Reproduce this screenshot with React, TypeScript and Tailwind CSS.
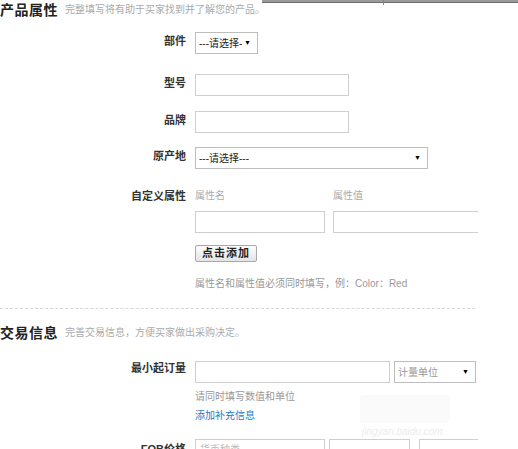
import React from "react";

const font = { fontFamily: '"Liberation Sans", "Noto Sans CJK SC", sans-serif' };

function Label({ children }: { children: React.ReactNode }) {
  return (
    <div className="text-right text-[11px] leading-[14px] font-bold text-[#333] pt-[2px] whitespace-nowrap">
      {children}
    </div>
  );
}

function Select({ text, w, gray }: { text: string; w: string; gray?: boolean }) {
  return (
    <div
      className={`${w} h-[22px] border border-[#bdbdbd] bg-white flex items-center justify-between pl-[3px] pr-[6px] text-[10px] ${gray ? "text-[#999]" : "text-[#222]"}`}
    >
      <span className="whitespace-nowrap overflow-hidden">{text}</span>
      <span className="text-[7px] text-black">▼</span>
    </div>
  );
}

function Input({ w }: { w: string }) {
  return <div className={`${w} h-[22px] border border-[#cfcfcf] bg-white shrink-0`} />;
}

export default function App() {
  return (
    <div className="w-[518px] h-[449px] overflow-hidden bg-white relative" style={font}>
      <div className="w-[478px] overflow-hidden">
        {/* Section 1 header */}
        <div className="flex items-center h-[20px] mt-[0px]">
          <span className="text-[14px] font-bold text-[#222] leading-[20px] tracking-[0.5px]">产品属性</span>
          <span className="ml-[7px] text-[10px] text-[#aaa] leading-[20px]">完整填写将有助于买家找到并了解您的产品。</span>
        </div>

        <div className="grid grid-cols-[186px_1fr] gap-x-[9px] mt-[12px] items-start">
          <Label>部件</Label>
          <Select text="---请选择-" w="w-[63px]" />
        </div>

        <div className="grid grid-cols-[186px_1fr] gap-x-[9px] mt-[20px] items-start">
          <Label>型号</Label>
          <Input w="w-[154px]" />
        </div>

        <div className="grid grid-cols-[186px_1fr] gap-x-[9px] mt-[15px] items-start">
          <Label>品牌</Label>
          <Input w="w-[154px]" />
        </div>

        <div className="grid grid-cols-[186px_1fr] gap-x-[9px] mt-[14px] items-start">
          <Label>原产地</Label>
          <Select text="---请选择---" w="w-[233px]" />
        </div>

        <div className="grid grid-cols-[186px_1fr] gap-x-[9px] mt-[20px] items-start">
          <div className="text-right text-[11px] leading-[14px] font-bold text-[#333] whitespace-nowrap">自定义属性</div>
          <div className="flex flex-col">
            <div className="flex text-[10px] leading-[14px] text-[#aaa]">
              <span className="w-[138px]">属性名</span>
              <span>属性值</span>
            </div>
            <div className="flex gap-[8px] mt-[8px]">
              <Input w="w-[130px]" />
              <Input w="w-[160px]" />
            </div>
            <button className="mt-[12px] w-[62px] h-[17px] border border-[#a9a9a9] rounded-[2px] bg-gradient-to-b from-[#fdfdfd] to-[#e4e4e4] text-[11px] font-bold text-[#222] leading-[15px] tracking-[1px]">
              点击添加
            </button>
            <div className="mt-[15px] text-[10px] leading-[14px] text-[#999] whitespace-nowrap">
              属性名和属性值必须同时填写，例：Color：Red
            </div>
          </div>
        </div>

        <div className="mt-[17px] w-[475px] border-t border-dashed border-[#d6d6d6]" />

        {/* Section 2 header */}
        <div className="flex items-center h-[20px] mt-[14px]">
          <span className="text-[14px] font-bold text-[#222] leading-[20px] tracking-[0.5px]">交易信息</span>
          <span className="ml-[7px] text-[10px] text-[#aaa] leading-[20px]">完善交易信息，方便买家做出采购决定。</span>
        </div>

        <div className="grid grid-cols-[186px_1fr] gap-x-[9px] mt-[18px] items-start">
          <div className="text-right text-[11px] leading-[14px] font-bold text-[#333] whitespace-nowrap">最小起订量</div>
          <div className="flex flex-col">
            <div className="flex gap-[4px]">
              <Input w="w-[195px]" />
              <Select text="计量单位" w="w-[82px]" gray />
            </div>
            <div className="mt-[7px] text-[10px] leading-[14px] text-[#999]">请同时填写数值和单位</div>
            <div className="mt-[5px] text-[10px] leading-[14px] text-[#2479cc]">添加补充信息</div>
          </div>
        </div>

        <div className="grid grid-cols-[186px_1fr] gap-x-[9px] mt-[16px] items-start">
          <div className="text-right text-[11px] leading-[14px] font-bold text-[#333] whitespace-nowrap pt-[3px]">FOB价格</div>
          <div className="flex">
            <div className="w-[130px] h-[22px] border border-[#cfcfcf] shrink-0 pl-[4px] text-[10px] text-[#bbb] leading-[20px]">货币种类</div>
            <div className="ml-[4px] w-[81px] h-[22px] border border-[#cfcfcf] shrink-0" />
            <div className="ml-[9px] w-[80px] h-[22px] border border-[#cfcfcf] shrink-0" />
          </div>
        </div>
      </div>

      {/* top edge line (overlay) */}
      <div className="absolute top-0 left-[262px] right-0 h-[3px] bg-[#9a9a9a] border-b border-[#6e6e6e]" />
      <div className="absolute top-0 left-[383px] w-px h-[5px] bg-[#888]" />

      {/* watermark */}
      <div className="absolute left-[360px] top-[395px] w-[90px] h-[28px] bg-[#f7f7f7] opacity-60 rounded-[3px]" />
      <div className="absolute left-[362px] top-[424px] text-[10px] text-[#ececec] italic">jingyan.baidu.com</div>
    </div>
  );
}
